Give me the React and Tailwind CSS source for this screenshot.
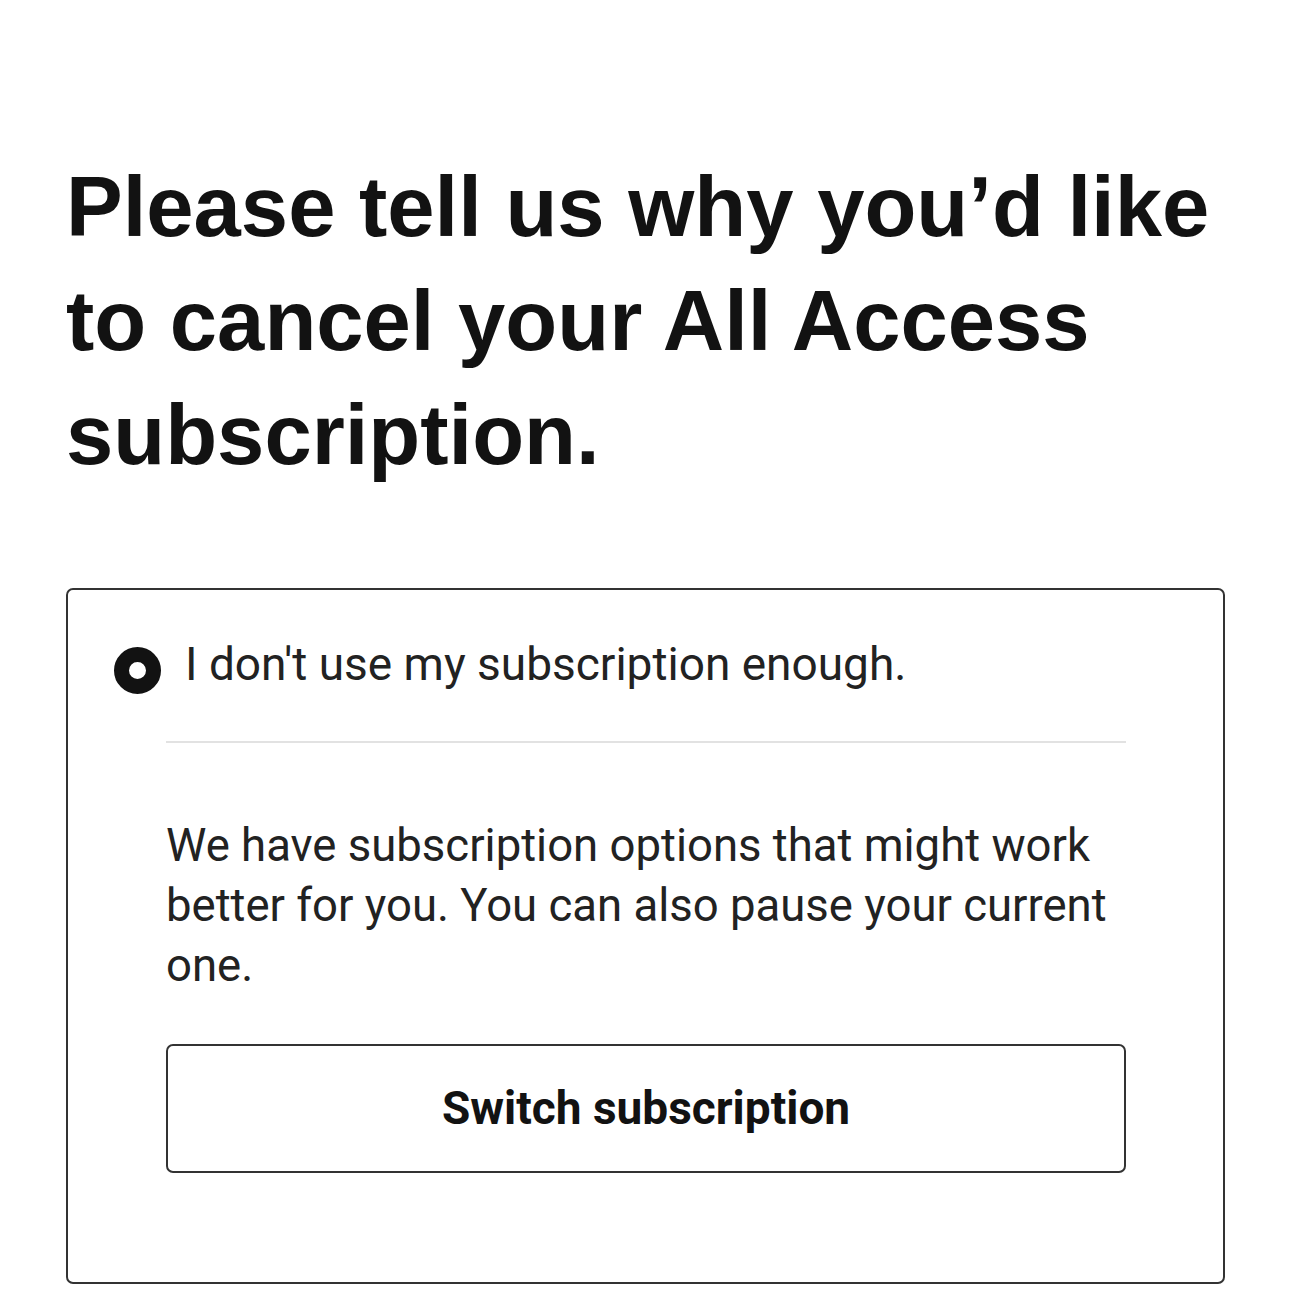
export default function App() {
  return (
    <div className="w-[1290px] h-[1294px] bg-white overflow-hidden" style={{ fontFamily: "Roboto, 'Liberation Sans', sans-serif" }}>
      <div className="pl-[66px] pr-[65px] pt-[150px]">
        <h1 className="text-[85px] leading-[114px] font-bold text-[#121212] font-['Liberation_Sans',Arial,sans-serif]">
          Please tell us why you’d like to cancel your All Access subscription.
        </h1>
        <div className="mt-[96px] border-2 border-[#333] rounded-[7px] h-[696px] pl-[46px] pr-[97px] pt-[42px]">
          <div className="flex items-start gap-[24px]">
            <div className="mt-[15px] w-[47px] h-[47px] rounded-full border-[15px] border-[#121212] shrink-0"></div>
            <span className="text-[46px] text-[#222] leading-[64px]">I don't use my subscription enough.</span>
          </div>
          <div className="ml-[52px]">
            <div className="mt-[45px] h-[2px] bg-[#e2e2e2]"></div>
            <p className="mt-[73px] text-[45.5px] leading-[60px] text-[#222]">
              We have subscription options that might work better for you. You can also pause your current one.
            </p>
            <button className="mt-[48px] w-full h-[129px] border-2 border-[#333] rounded-[7px] text-[46px] font-bold text-[#121212]">
              Switch subscription
            </button>
          </div>
        </div>
      </div>
    </div>
  );
}
